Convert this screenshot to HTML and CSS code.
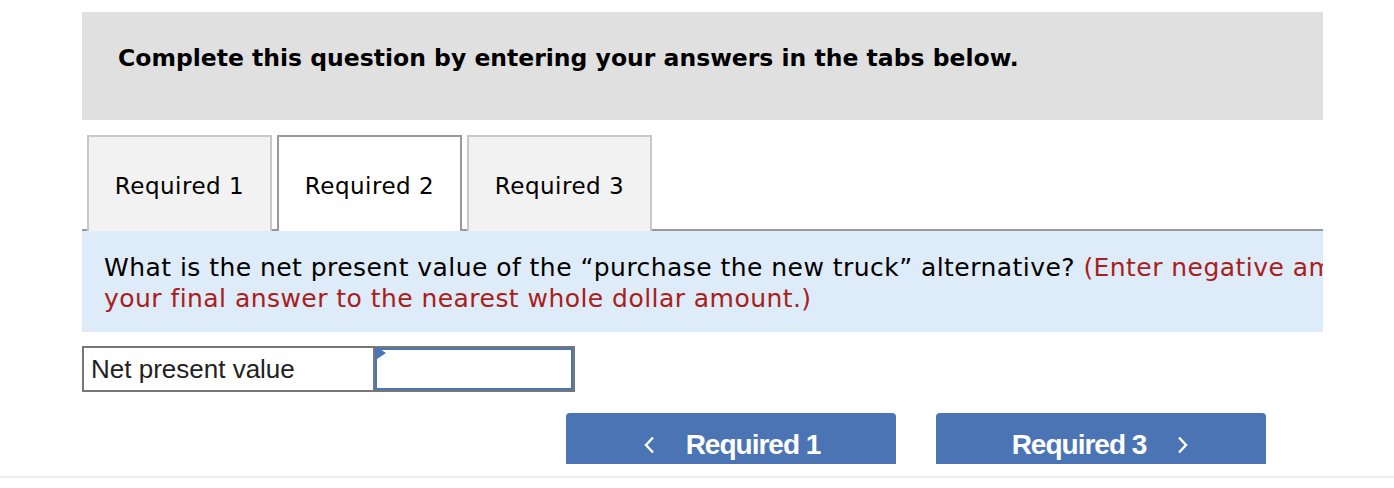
FILE: index.html
```html
<!DOCTYPE html>
<html>
<head>
<meta charset="utf-8">
<link rel="stylesheet" href="styles.css">
</head>
<body>
<div class="page">
  <div class="header-box">
    <h1 class="heading">Complete this question by entering your answers in the tabs below.</h1>
  </div>
  <div class="tabs">
    <div class="tab">Required 1</div>
    <div class="tab active">Required 2</div>
    <div class="tab">Required 3</div>
  </div>
  <div class="panel">
    <p class="question">What is the net present value of the “purchase the new truck” alternative? <span class="hint">(Enter negative amounts with a minus sign. Round<br>your final answer to the nearest whole dollar amount.)</span></p>
  </div>
  <div class="answer-row">
    <div class="label-cell">Net present value</div>
    <div class="input-cell"><span class="flag"></span></div>
  </div>
  <div class="nav-clip">
    <div class="nav">
      <button class="nav-btn"><svg class="chev" width="14" height="18" viewBox="0 0 14 18"><path d="M11 1.5 L4 9 L11 16.5" fill="none" stroke="#fff" stroke-width="2.4"/></svg><span>Required 1</span></button>
      <button class="nav-btn"><span>Required 3</span><svg class="chev" width="14" height="18" viewBox="0 0 14 18"><path d="M3 1.5 L10 9 L3 16.5" fill="none" stroke="#fff" stroke-width="2.4"/></svg></button>
    </div>
  </div>
</div>
<div class="footer-line"></div>
</body>
</html>
```
FILE: styles.css
```css
html, body {
  margin: 0;
  padding: 0;
  background: #fff;
}
body {
  font-family: "DejaVu Sans", Verdana, sans-serif;
  color: #000;
}
.page {
  margin-left: 82px;
  width: 1241px;
  padding-top: 12px;
}
.header-box {
  background: #e0e0e0;
  height: 108px;
  padding-left: 36px;
  box-sizing: border-box;
  display: flex;
  align-items: flex-start;
}
.heading {
  margin: 0;
  margin-top: 30px;
  font-size: 23.5px;
  font-weight: bold;
  line-height: 32px;
  letter-spacing: 0;
}
.tabs {
  display: flex;
  gap: 5px;
  padding-left: 5px;
  margin-top: 15px;
  border-bottom: 2px solid #999;
  height: 94px;
}
.tab {
  width: 185px;
  height: 96px;
  box-sizing: border-box;
  border: 2px solid #c8c8c8;
  border-bottom: none;
  background: #f2f2f2;
  display: flex;
  align-items: center;
  justify-content: center;
  font-size: 23px;
  letter-spacing: 0.5px;
  padding-top: 4px;
}
.tab.active {
  background: #fff;
  border-color: #999;
  position: relative;
  z-index: 1;
}
.panel {
  background: #deebf8;
  height: 101px;
  overflow: hidden;
  padding: 21px 0 0 22px;
  box-sizing: border-box;
}
.question {
  margin: 0;
  font-size: 25px;
  letter-spacing: 0.45px;
  line-height: 31px;
  white-space: nowrap;
  color: #000;
}
.hint {
  color: #a8201c;
}
.answer-row {
  display: flex;
  margin-top: 14px;
  height: 46px;
}
.label-cell {
  width: 293px;
  box-sizing: border-box;
  border: 2px solid #777;
  font-family: "Liberation Sans", Arial, sans-serif;
  font-size: 26px;
  padding-left: 7px;
  display: flex;
  align-items: center;
  color: #222;
}
.input-cell {
  width: 200px;
  box-sizing: border-box;
  border: 2px solid #777;
  border-left: none;
  box-shadow: inset 0 0 0 2px #4a76b6;
  position: relative;
  background: #fff;
}
.flag {
  position: absolute;
  left: 2px;
  top: -1px;
  width: 0;
  height: 0;
  border-top: 6px solid transparent;
  border-bottom: 6px solid transparent;
  border-left: 9px solid #4a76b6;
}
.nav-clip {
  margin-top: 21px;
  height: 51px;
  overflow: hidden;
}
.nav {
  display: flex;
  gap: 40px;
  padding-left: 484px;
}
.nav-btn {
  width: 330px;
  height: 62px;
  border: none;
  border-radius: 4px 4px 0 0;
  background: #4a74b4;
  color: #fff;
  font-family: "Liberation Sans", Arial, sans-serif;
  font-weight: bold;
  font-size: 28px;
  letter-spacing: -1px;
  display: flex;
  align-items: flex-start;
  justify-content: center;
  gap: 30px;
  padding: 16px 0 0 0;
}
.nav-btn span {
  line-height: 32px;
}
.chev {
  margin-top: 7px;
}
.footer-line {
  margin-top: 12px;
  height: 2px;
  background: #eeeeee;
}
```
